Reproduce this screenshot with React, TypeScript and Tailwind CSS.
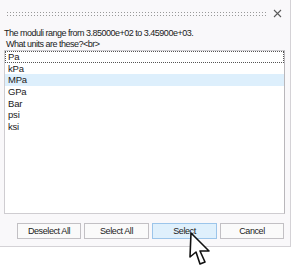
import React from "react";

const items = ["Pa", "kPa", "MPa", "GPa", "Bar", "psi", "ksi"];

export default function App() {
  return (
    <div className="relative w-[300px] h-[269px] bg-white overflow-hidden" style={{ fontFamily: '"Liberation Sans", Arial, sans-serif' }}>
      <div className="w-[291px] h-[247px] bg-[#f9f8fa] border-r border-b border-[#d4d2d6] flex flex-col">
        <div className="h-[27px] flex items-center pl-[7px] pr-[8px] gap-[6px]">
          <div className="flex-1 flex flex-col gap-[2px]">
            <div className="h-px bg-[linear-gradient(to_right,#9a9a9a_1px,transparent_1px)] bg-[length:3px_1px]" />
            <div className="h-px bg-[linear-gradient(to_right,#9a9a9a_1px,transparent_1px)] bg-[length:3px_1px]" />
          </div>
          <svg width="9" height="9" viewBox="0 0 9 9" className="shrink-0">
            <path d="M1 1 L8 8 M8 1 L1 8" stroke="#5a5a5a" strokeWidth="1.1" />
          </svg>
        </div>
        <div className="pl-[4px] pt-px text-[9px] leading-[11px] tracking-[-0.5px] text-[#1a1a1a]">
          <div>The moduli range from 3.85000e+02 to 3.45900e+03.</div>
          <div>&nbsp;What units are these?&lt;br&gt;</div>
        </div>
        <div className="ml-[4px] w-[281px] h-[164px] bg-white border border-[#cfcdd1] border-r-[#b9b7bb]">
          {items.map((it, i) => (
            <div
              key={it}
              className={
                "h-[11.7px] leading-[11.7px] text-[9.5px] pl-[3px] tracking-[-0.2px] text-[#1a1a1a] " +
                (i === 0 ? "outline outline-1 outline-dotted outline-[#555] -outline-offset-1 " : "") +
                (i === 2 ? "bg-[#ddeffc] " : "")
              }
            >
              {it}
            </div>
          ))}
        </div>
        <div className="flex gap-[3px] pl-[17px] mt-[9px]">
          <button className="w-[64px] h-[16px] text-[9px] leading-[14px] tracking-[-0.4px] border border-[#c2c0c4] bg-[#fafafa] text-[#1a1a1a]">Deselect All</button>
          <button className="w-[65px] h-[16px] text-[9px] leading-[14px] tracking-[-0.4px] border border-[#c2c0c4] bg-[#fafafa] text-[#1a1a1a]">Select All</button>
          <button className="w-[65px] h-[16px] text-[9px] leading-[14px] tracking-[-0.4px] border border-[#9cc5ea] bg-[#dff0fc] text-[#1a1a1a]">Select</button>
          <button className="w-[64px] h-[16px] text-[9px] leading-[14px] tracking-[-0.4px] border border-[#c2c0c4] bg-[#fafafa] text-[#1a1a1a]">Cancel</button>
        </div>
      </div>
      <svg className="absolute left-[187px] top-[232px]" width="28" height="36" viewBox="0 0 28 36">
        <polygon points="4,1 3,25 9,20 13,32 18,30 13,19 22,19" fill="white" stroke="#111" strokeWidth="1.6" strokeLinejoin="round" />
      </svg>
    </div>
  );
}
